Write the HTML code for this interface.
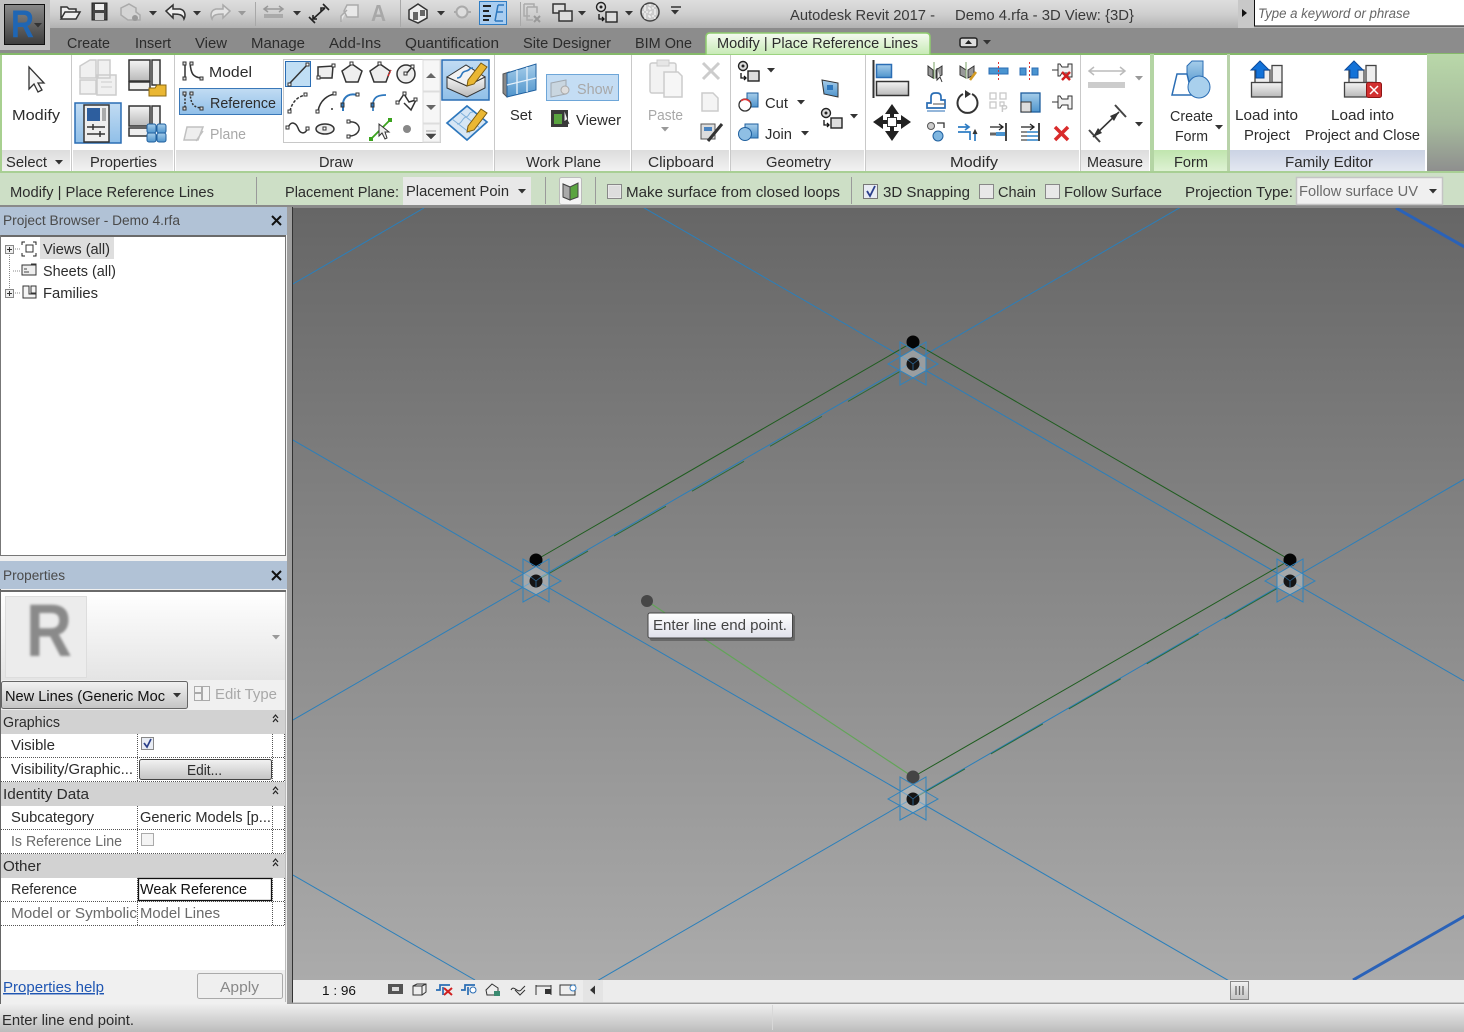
<!DOCTYPE html>
<html><head><meta charset="utf-8"><style>
html,body{margin:0;padding:0;background:#f0f0f0}
body{width:1464px;height:1032px;overflow:hidden}
svg{display:block;position:absolute;left:0;top:0}
text{font-family:"Liberation Sans",sans-serif;font-size:14.5px;fill:#2c2c2c}
.g{fill:#a8a8a8}.m{fill:#6a6a6a}
</style></head><body>
<svg width="1464" height="1032" viewBox="0 0 1464 1032" xmlns="http://www.w3.org/2000/svg">
<defs>
<linearGradient id="tb" x1="0" y1="0" x2="0" y2="1"><stop offset="0" stop-color="#dedede"/><stop offset=".5" stop-color="#cfcfcf"/><stop offset="1" stop-color="#b2b2b2"/></linearGradient>
<linearGradient id="cv" x1="0" y1="0" x2="0" y2="1"><stop offset="0" stop-color="#666"/><stop offset="1" stop-color="#ababab"/></linearGradient>
<linearGradient id="st" x1="0" y1="0" x2="0" y2="1"><stop offset="0" stop-color="#efefef"/><stop offset="1" stop-color="#bcbcbc"/></linearGradient>
<linearGradient id="tab" x1="0" y1="0" x2="0" y2="1"><stop offset="0" stop-color="#f6fbf2"/><stop offset="1" stop-color="#c6eab4"/></linearGradient>
<linearGradient id="rb" x1="0" y1="0" x2="0" y2="1"><stop offset="0" stop-color="#8a8a8a"/><stop offset="1" stop-color="#3c3c3c"/></linearGradient>
<linearGradient id="ft" x1="0" y1="0" x2="0" y2="1"><stop offset="0" stop-color="#dcdcdc"/><stop offset="1" stop-color="#f2f2f2"/></linearGradient>
<linearGradient id="ftg" x1="0" y1="0" x2="0" y2="1"><stop offset="0" stop-color="#c0e5ae"/><stop offset="1" stop-color="#dff2d5"/></linearGradient>
<linearGradient id="ftb" x1="0" y1="0" x2="0" y2="1"><stop offset="0" stop-color="#cbd3e4"/><stop offset="1" stop-color="#e4e8f1"/></linearGradient>
<linearGradient id="rg" x1="0" y1="0" x2="0" y2="1"><stop offset="0" stop-color="#b9d8a9"/><stop offset=".6" stop-color="#a5b99c"/><stop offset="1" stop-color="#8e8e8e"/></linearGradient>
<linearGradient id="gr" x1="0" y1="0" x2="0" y2="1"><stop offset="0" stop-color="#f4f4f4"/><stop offset="1" stop-color="#b9b9b9"/></linearGradient>
<linearGradient id="bl" x1="0" y1="0" x2="0" y2="1"><stop offset="0" stop-color="#a6cdea"/><stop offset="1" stop-color="#4f94cc"/></linearGradient>
<linearGradient id="sel" x1="0" y1="0" x2="0" y2="1"><stop offset="0" stop-color="#c2dcf3"/><stop offset="1" stop-color="#90bfe8"/></linearGradient>
<linearGradient id="btn" x1="0" y1="0" x2="0" y2="1"><stop offset="0" stop-color="#f2f2f2"/><stop offset="1" stop-color="#c4c4c4"/></linearGradient>
<linearGradient id="tip" x1="0" y1="0" x2="0" y2="1"><stop offset="0" stop-color="#fff"/><stop offset="1" stop-color="#dfe0ea"/></linearGradient>
<linearGradient id="pv" x1="0" y1="0" x2="0" y2="1"><stop offset="0" stop-color="#fff"/><stop offset="1" stop-color="#e4e4e4"/></linearGradient>
<filter id="soft" x="-10%" y="-10%" width="120%" height="120%"><feGaussianBlur stdDeviation="1.2"/></filter>
<g id="wp"><path d="M-13-6L0-13.500L13-6V8L0 15.500L-13 8Z" fill="#c8d0d4" fill-opacity=".45"/><path d="M-25 1L13-21V22ZM25 1L-13-21V22Z" fill="none" stroke="#2f83bd" stroke-width="1"/><circle cy="1" r="6.500" fill="#151515"/><path d="M0 1V7M0 1L-5-3M0 1L5-3" stroke="#2f6d9e" stroke-width=".8" fill="none"/></g>
<path id="ar" d="M0 0H8L4 4.500Z" fill="#333"/>
<path id="arg" d="M0 0H8L4 4.500Z" fill="#999"/>
<g id="pin"><path d="M0 8H6" stroke="#333" fill="none"/><path d="M6 2H8L10 5H16V2H20V15H16V11H10L8 14H6Z" fill="#f2f2f2" stroke="#333"/></g>
<g id="sw"><circle cx="5" cy="5" r="4.500" fill="#ddd" stroke="#222" stroke-width="1.400"/><circle cx="5" cy="5" r="1.500" fill="#222"/><rect x="10" y="10" width="11" height="10" fill="#ddd" stroke="#222" stroke-width="1.400"/><path d="M3 12V17H8M6 15L8 17L6 19" fill="none" stroke="#111" stroke-width="1.300"/></g>
</defs>

<!-- title bar -->
<rect width="1464" height="28" fill="url(#tb)"/>
<!-- QAT -->
<path d="M61 18V7H67L69 9H76V12M61 19L65 12H80L76 19Z" fill="#efefef" stroke="#333" stroke-width="1.500"/>
<path d="M92 3H107V20H92Z" fill="#444" stroke="#222"/><rect x="95" y="4" width="9" height="6" fill="#eee"/><rect x="95" y="13" width="9" height="7" fill="#ccc"/>
<path d="M121 8L129 4L136 8V12L140 15V20H128L121 15Z" fill="#d4d4d4" stroke="#aaa" stroke-width="1.500"/><circle cx="135" cy="18" r="3" fill="#999"/>
<use href="#ar" x="149" y="11"/>
<path d="M166 11L173 5V9H180C185 10 186 15 184 19C183 15 180 14 173 14V18Z" fill="#eee" stroke="#333" stroke-width="1.500"/>
<use href="#ar" x="193" y="11"/>
<path d="M230 11L223 5V9H216C211 10 210 15 212 19C213 15 216 14 223 14V18Z" fill="#e4e4e4" stroke="#aaa" stroke-width="1.500"/>
<use href="#arg" x="238" y="11"/>
<path d="M255.500 2V26" stroke="#a8a8a8"/>
<path d="M264 9H283M268 6L264 9L268 12M279 6L283 9L279 12" fill="none" stroke="#999" stroke-width="1.500"/><rect x="264" y="14" width="19" height="4" fill="#aaa"/>
<use href="#ar" x="293" y="11"/>
<path d="M313 19L325 8M309 17L315 23M323 4L329 10M313 15V19H317M321 12V8H325" fill="none" stroke="#222" stroke-width="1.600"/>
<path d="M341 22V16L347 10M347 5H358V17H347L344 11Z" fill="#e8e8e8" stroke="#aaa" stroke-width="1.500"/>
<text x="371" y="21" class="g" style="font-size:23px;font-weight:bold" textLength="15" lengthAdjust="spacingAndGlyphs">A</text>
<path d="M400.500 0V27" stroke="#a8a8a8"/>
<path d="M409 10L418 4L427 10V18L418 23L409 19Z" fill="#eee" stroke="#333" stroke-width="1.500"/><path d="M413 12H418V20H413ZM420 10H425V16H420Z" fill="#666"/>
<use href="#ar" x="437" y="11"/>
<path d="M454 12H457M467 12H471" stroke="#aaa" stroke-width="2"/><circle cx="462" cy="12" r="5.500" fill="#ddd" stroke="#aaa" stroke-width="2"/>
<rect x="479.500" y="1.500" width="27" height="23" fill="#a9cdf0" stroke="#2f7dc4"/>
<path d="M483 6H491M483 11H489M483 16H491M483 20H489" stroke="#222" stroke-width="2"/><path d="M495 21L498 5M498 5H504M497 12H503M495 21H503" stroke="#2d77bd" stroke-width="1.500" fill="none"/>
<path d="M520.500 2V26" stroke="#a8a8a8"/>
<path d="M524 4H534V7M524 4V16H530M527 7H537V13M527 7V20H533" fill="none" stroke="#aaa" stroke-width="1.500"/><path d="M534 16L540 22M540 16L534 22" stroke="#999" stroke-width="2"/>
<rect x="553" y="4" width="12" height="9" fill="#ddd" stroke="#333" stroke-width="1.500"/><rect x="559" y="11" width="13" height="10" fill="#ddd" stroke="#333" stroke-width="1.500"/>
<use href="#ar" x="578" y="11"/>
<use href="#sw" x="596" y="2"/>
<use href="#ar" x="625" y="11"/>
<circle cx="650" cy="12" r="9" fill="#ccc" stroke="#444" stroke-width="1.500"/><path d="M644 8H656M642 12H658M644 16H656M650 4V20M645 5V19M655 5V19" stroke="#fff" stroke-dasharray="2 2" fill="none"/>
<path d="M671 7H681" stroke="#333" stroke-width="1.500"/><use href="#ar" x="671" y="10"/>
<text x="790" y="20" style="fill:#3a3a3a" textLength="145" lengthAdjust="spacingAndGlyphs">Autodesk Revit 2017 -</text>
<text x="955" y="20" style="fill:#3a3a3a" textLength="179" lengthAdjust="spacingAndGlyphs">Demo 4.rfa - 3D View: {3D}</text>
<rect x="1238" y="0" width="16" height="28" fill="#c8c8c8"/>
<path d="M1242 9L1247 13L1242 17Z" fill="#111"/>
<rect x="1254.500" y="-2" width="212" height="28" fill="#fff" stroke="#111"/>
<text x="1258" y="18" style="font-size:13.500px;font-style:italic;fill:#666" textLength="152" lengthAdjust="spacingAndGlyphs">Type a keyword or phrase</text>

<!-- tab bar -->
<rect y="28" width="1464" height="26" fill="#8c8c8c"/>
<rect x="0" y="28" width="50" height="22" fill="#bfbfbf"/>
<rect x="0" y="0" width="50" height="28" fill="#bfbfbf"/>
<rect x="4.500" y="4.500" width="40" height="40" fill="url(#rb)" stroke="#111"/>
<text x="11" y="37" style="font-size:39px;font-weight:bold;fill:#1f66b4" textLength="23" lengthAdjust="spacingAndGlyphs">R</text>
<use href="#ar" x="34" y="23"/>
<g>
<text x="67" y="48" textLength="43" lengthAdjust="spacingAndGlyphs">Create</text>
<text x="135" y="48" textLength="36" lengthAdjust="spacingAndGlyphs">Insert</text>
<text x="195" y="48" textLength="32" lengthAdjust="spacingAndGlyphs">View</text>
<text x="251" y="48" textLength="54" lengthAdjust="spacingAndGlyphs">Manage</text>
<text x="329" y="48" textLength="52" lengthAdjust="spacingAndGlyphs">Add-Ins</text>
<text x="405" y="48" textLength="94" lengthAdjust="spacingAndGlyphs">Quantification</text>
<text x="523" y="48" textLength="88" lengthAdjust="spacingAndGlyphs">Site Designer</text>
<text x="635" y="48" textLength="57" lengthAdjust="spacingAndGlyphs">BIM One</text>
</g>
<rect x="0" y="53" width="1464" height="2" fill="#85b96a"/>
<path d="M706 55V37Q706 33 710 33H926Q930 33 930 37V55Z" fill="url(#tab)" stroke="#8ecb6e" stroke-width="1.500"/>
<text x="717" y="48" textLength="201" lengthAdjust="spacingAndGlyphs">Modify | Place Reference Lines</text>
<rect x="960" y="38" width="17" height="9" rx="2" fill="#ddd" stroke="#222" stroke-width="1.500"/><path d="M965 44L968.500 40L972 44Z" fill="#222"/>
<use href="#ar" x="983" y="40" />

<!-- ribbon -->
<rect y="55" width="1464" height="117" fill="#fff"/>
<rect x="1427" y="54" width="37" height="118" fill="url(#rg)"/>
<rect x="1150" y="54" width="4" height="118" fill="#b4d5a4"/>
<rect x="1227" y="54" width="3" height="118" fill="#b8d2a9"/>
<g fill="url(#ft)">
<rect x="2" y="150" width="68" height="22"/><rect x="73" y="150" width="100" height="22"/><rect x="176" y="150" width="317" height="22"/><rect x="495" y="150" width="135" height="22"/><rect x="632" y="150" width="97" height="22"/><rect x="731" y="150" width="133" height="22"/><rect x="866" y="150" width="213" height="22"/><rect x="1081" y="150" width="68" height="22"/>
</g>
<rect x="1154" y="150" width="73" height="22" fill="url(#ftg)"/><rect x="1230" y="150" width="195" height="22" fill="url(#ftb)"/>
<g stroke="#c9c9c9"><path d="M71.500 55V172M174.500 55V172M494.500 55V172M631.500 55V172M730.500 55V172M865.500 55V172M1080.500 55V172"/></g>
<rect x="0" y="55" width="2" height="117" fill="#a8d090"/>
<rect x="0" y="171" width="1464" height="2" fill="#a8cf94"/>
<g>
<text x="12" y="120" textLength="48" lengthAdjust="spacingAndGlyphs">Modify</text>
<text x="6" y="167" textLength="41" lengthAdjust="spacingAndGlyphs">Select</text>
<text x="90" y="167" textLength="67" lengthAdjust="spacingAndGlyphs">Properties</text>
<text x="319" y="167" textLength="34" lengthAdjust="spacingAndGlyphs">Draw</text>
<text x="526" y="167" textLength="75" lengthAdjust="spacingAndGlyphs">Work Plane</text>
<text x="648" y="167" textLength="66" lengthAdjust="spacingAndGlyphs">Clipboard</text>
<text x="766" y="167" textLength="65" lengthAdjust="spacingAndGlyphs">Geometry</text>
<text x="950" y="167" textLength="48" lengthAdjust="spacingAndGlyphs">Modify</text>
<text x="1087" y="167" textLength="56" lengthAdjust="spacingAndGlyphs">Measure</text>
<text x="1174" y="167" textLength="34" lengthAdjust="spacingAndGlyphs">Form</text>
<text x="1285" y="167" textLength="88" lengthAdjust="spacingAndGlyphs">Family Editor</text>
<text x="209" y="77" textLength="43" lengthAdjust="spacingAndGlyphs">Model</text>
<text x="510" y="120" textLength="22" lengthAdjust="spacingAndGlyphs">Set</text>
<text x="576" y="125" textLength="45" lengthAdjust="spacingAndGlyphs">Viewer</text>
<text x="765" y="108" textLength="23" lengthAdjust="spacingAndGlyphs">Cut</text>
<text x="765" y="139" textLength="27" lengthAdjust="spacingAndGlyphs">Join</text>
<text x="1170" y="121" textLength="43" lengthAdjust="spacingAndGlyphs">Create</text>
<text x="1175" y="141" textLength="33" lengthAdjust="spacingAndGlyphs">Form</text>
<text x="1235" y="120" textLength="63" lengthAdjust="spacingAndGlyphs">Load into</text>
<text x="1244" y="140" textLength="46" lengthAdjust="spacingAndGlyphs">Project</text>
<text x="1331" y="120" textLength="63" lengthAdjust="spacingAndGlyphs">Load into</text>
<text x="1305" y="140" textLength="115" lengthAdjust="spacingAndGlyphs">Project and Close</text>
</g>
<use href="#ar" x="55" y="160"/>
<!-- modify cursor -->
<path d="M29 67V89L34 84L38 92L42 90L38 83H44Z" fill="#f6f6f6" stroke="#333" stroke-width="1.300"/>
<!-- properties icons -->
<path d="M80 66L90 60H96V78H80ZM98 60H110V78H98ZM80 80H96V94H80ZM97 75H116V95H97Z" fill="#f0f0f0" stroke="#ccc" stroke-width="1.500"/>
<path d="M101 82H112M101 87H112" stroke="#ccc"/>
<rect x="129" y="60" width="21" height="21" fill="url(#gr)" stroke="#333" stroke-width="1.500"/><rect x="152" y="60" width="8" height="25" fill="#eee" stroke="#333" stroke-width="1.500"/><rect x="129" y="82" width="21" height="8" fill="#eee" stroke="#333" stroke-width="1.500"/>
<path d="M149 88H155L157 85H166V96H149Z" fill="#eab733" stroke="#8c6a13"/>
<rect x="75" y="103" width="46" height="40" fill="url(#sel)" stroke="#2a6db4" stroke-width="1.500"/>
<rect x="84" y="105" width="25" height="37" fill="#eee" stroke="#333" stroke-width="1.500"/><rect x="87" y="108" width="13" height="13" fill="#2d5e9e"/><rect x="102" y="108" width="4" height="13" fill="#aaa"/>
<path d="M87 127H105M87 134H105M93 124V130M100 131V137" stroke="#333" stroke-width="1.500"/>
<rect x="129" y="106" width="21" height="20" fill="url(#gr)" stroke="#333" stroke-width="1.500"/><rect x="152" y="106" width="8" height="24" fill="#eee" stroke="#333" stroke-width="1.500"/><rect x="129" y="128" width="21" height="8" fill="#eee" stroke="#333" stroke-width="1.500"/>
<g fill="url(#bl)" stroke="#1f5f9e"><rect x="147" y="124" width="9" height="9" rx="2"/><rect x="157" y="124" width="9" height="9" rx="2"/><rect x="147" y="133" width="9" height="9" rx="2"/><rect x="157" y="133" width="9" height="9" rx="2"/></g>
<!-- draw -->
<path d="M185 65V78M190 63C191 74 193 77 201 78" fill="none" stroke="#333" stroke-width="1.500"/><g fill="#ddd" stroke="#333"><rect x="183" y="62" width="3" height="3"/><rect x="190" y="62" width="3" height="3"/><rect x="183" y="77" width="3" height="3"/><rect x="200" y="77" width="3" height="3"/></g>
<rect x="179.500" y="88.500" width="102" height="26" fill="url(#sel)" stroke="#3a78b8"/>
<path d="M185 95V108M190 93C191 104 193 107 201 108" fill="none" stroke="#333" stroke-width="1.500" stroke-dasharray="2 1.500"/><g fill="#ddd" stroke="#333"><rect x="183" y="92" width="3" height="3"/><rect x="190" y="92" width="3" height="3"/><rect x="183" y="107" width="3" height="3"/><rect x="200" y="107" width="3" height="3"/></g>
<text x="210" y="108" textLength="66" lengthAdjust="spacingAndGlyphs">Reference</text>
<path d="M184 140L187 127H203L198 140ZM196 141L203 131" fill="#eee" stroke="#c0c0c0" stroke-width="1.500"/>
<text x="210" y="139" class="g" textLength="36" lengthAdjust="spacingAndGlyphs">Plane</text>
<rect x="283.500" y="59.500" width="157" height="83" fill="#fff" stroke="#c8c8c8"/>
<rect x="423" y="60" width="17" height="31" fill="#f6f6f6" stroke="#ddd"/><rect x="423" y="92" width="17" height="31" fill="#f6f6f6" stroke="#ddd"/><rect x="423" y="124" width="17" height="18" fill="#f4f4f4" stroke="#ddd"/>
<path d="M426 78L431 73L436 78Z" fill="#666"/><path d="M426 105H436L431 110Z" fill="#666"/><path d="M426 131H436M426 134H436L431 139Z" fill="#444" stroke="#444" stroke-width=".5"/>
<rect x="285.500" y="61.500" width="25" height="25" fill="#c0def4" stroke="#2a6db4"/>
<g fill="none" stroke="#333" stroke-width="1.500">
<path d="M290 83L307 65"/>
<path d="M318 67L333 66L332 78L318 78Z" fill="#eee"/><path d="M352 64L362 71L358 82H346L342 71Z" fill="#eee"/><path d="M380 64L390 71L386 82H374L370 71Z" fill="#eee"/><circle cx="406" cy="74" r="9" fill="#eee"/><path d="M406 74L412 67"/>
<path d="M290 111C292 102 298 96 306 95" stroke-dasharray="3 1.500"/><path d="M318 111C320 100 328 95 335 94"/><path d="M343 111V103C344 96 350 93 357 95" stroke="#2d77bd" stroke-width="2"/><path d="M373 111V103C374 97 378 95 386 95" stroke="#2d77bd" stroke-width="1.700"/><path d="M398 103L404 94L409 102L416 100L411 110L404 103" />
<path d="M288 128C291 120 296 123 298 128C300 134 305 135 308 128"/><ellipse cx="325" cy="129" rx="9" ry="5" fill="#eee"/><path d="M349 122C358 121 361 128 358 132C356 135 353 136 349 136"/>
</g>
<g fill="#fff" stroke="#333"><rect x="288" y="83" width="3" height="3"/><rect x="306" y="63" width="3" height="3"/><rect x="317" y="76" width="3" height="3"/><rect x="332" y="64" width="3" height="3"/><rect x="350" y="62" width="3" height="3"/><rect x="378" y="62" width="3" height="3"/><rect x="404" y="72" width="3" height="3"/><rect x="411" y="65" width="3" height="3"/><rect x="288" y="110" width="3" height="3"/><rect x="304" y="93" width="3" height="3"/><rect x="316" y="110" width="3" height="3"/><rect x="333" y="92" width="3" height="3"/><rect x="341" y="103" width="3" height="4" fill="#2d77bd"/><rect x="356" y="93" width="3" height="3"/><rect x="371" y="103" width="3" height="4" fill="#2d77bd"/><rect x="396" y="101" width="3" height="3"/><rect x="403" y="92" width="3" height="3"/><rect x="414" y="98" width="3" height="3"/><rect x="286" y="126" width="3" height="3"/><rect x="306" y="127" width="3" height="3"/><rect x="323" y="127" width="3" height="3"/><rect x="347" y="120" width="3" height="3"/><rect x="347" y="135" width="3" height="3"/></g>
<path d="M388 76L391 70" stroke="#d22" stroke-width="1.500" stroke-dasharray="2 1"/>
<circle cx="332" cy="109" r="1" fill="#333"/>
<path d="M371 139L390 120" stroke="#3ba31e" stroke-width="1.800"/><rect x="369" y="137" width="4" height="4" fill="#3ba31e"/><rect x="388" y="118" width="4" height="4" fill="#3ba31e"/>
<path d="M379 124V136L382 133L385 139L387 138L385 132H389Z" fill="#eee" stroke="#333"/>
<circle cx="407" cy="129" r="4" fill="#888"/>
<rect x="442" y="60" width="47" height="40" fill="url(#sel)" stroke="#2a6db4" stroke-width="1.500"/>
<path d="M447 77V88L467 97L485 88V77L467 86Z" fill="url(#gr)" stroke="#333"/><path d="M447 77L466 65L485 77L467 86Z" fill="#f2f2f2" stroke="#333"/><path d="M457 78C463 78 460 72 466 71C471 70 468 68 473 68" fill="none" stroke="#2d77bd" stroke-width="1.600"/>
<path d="M468 80L481 63L487 67L474 84L467 86Z" fill="#eab733" stroke="#7a5b10"/>
<path d="M447 123L467 106L487 122L467 140Z" fill="#d6e6f5" stroke="#2d77bd" stroke-width="1.700"/><path d="M457 124C462 124 462 118 466 117C470 116 468 112 473 112M452 119L470 133M461 113L480 128" fill="none" stroke="#7fb0da"/>
<path d="M468 126L481 109L487 113L474 130L467 132Z" fill="#eab733" stroke="#7a5b10"/>
<!-- work plane -->
<path d="M503 74L509 72V92L507 97L503 93Z" fill="#888" stroke="#555"/>
<path d="M507 73L536 64V90L507 97Z" fill="url(#bl)" stroke="#1f5f9e"/><path d="M517 70V94M527 67V92M507 85L536 78" stroke="#e8f2fb" stroke-width="1.300"/>
<rect x="546.500" y="74.500" width="72" height="26" fill="#c4ddf4" stroke="#6ea6d8"/>
<path d="M551 83L566 80V94L551 97Z" fill="#c9d6e0" stroke="#a0a8b0"/><circle cx="565" cy="90" r="4" fill="#ddd" stroke="#a8a8a8"/>
<text x="577" y="94" class="g" textLength="36" lengthAdjust="spacingAndGlyphs">Show</text>
<rect x="551" y="110" width="17" height="17" fill="#3a3a3a"/><rect x="554" y="114" width="8" height="10" fill="#5aa440"/><path d="M564 110V122L567 120L569 124" fill="#eee" stroke="#333"/>
<!-- clipboard -->
<rect x="650" y="63" width="26" height="30" rx="2" fill="#f2f2f2" stroke="#ccc" stroke-width="1.500"/><rect x="657" y="60" width="12" height="6" fill="#e6e6e6" stroke="#ccc"/><path d="M664 72H678L682 76V97H664Z" fill="#f6f6f6" stroke="#ccc" stroke-width="1.500"/>
<text x="648" y="120" class="g" textLength="35" lengthAdjust="spacingAndGlyphs">Paste</text>
<use href="#arg" x="661" y="127"/>
<path d="M703 63L719 79M719 63L703 79" stroke="#ccc" stroke-width="3"/>
<path d="M702 93H713L718 98V111H702Z" fill="#f4f4f4" stroke="#ccc" stroke-width="1.500"/>
<rect x="701" y="124" width="14" height="15" fill="#ddd" stroke="#555"/><rect x="704" y="127" width="8" height="4" fill="#4a84c0"/><path d="M708 141L722 124" stroke="#333" stroke-width="3"/>
<!-- geometry -->
<use href="#sw" x="738" y="61"/><use href="#ar" x="767" y="68"/>
<rect x="747" y="93" width="11" height="14" fill="url(#bl)" stroke="#1f5f9e"/><circle cx="745" cy="105" r="6" fill="#fff" stroke="#333" stroke-width="1.300"/><path d="M741 101A6 6 0 0 1 750 102" stroke="#d33" fill="none" stroke-width="1.500"/>
<use href="#ar" x="797" y="100"/>
<rect x="745" y="124" width="13" height="14" fill="url(#bl)" stroke="#1f5f9e"/><circle cx="745" cy="134" r="6.500" fill="#8fbfe4" stroke="#1f5f9e"/>
<use href="#ar" x="801" y="131"/>
<path d="M822 80L838 83V97L824 94Z" fill="url(#bl)" stroke="#333"/><rect x="827" y="85" width="6" height="5" fill="#2d77bd"/>
<use href="#sw" x="821" y="108"/><use href="#ar" x="850" y="114"/>
<!-- modify -->
<path d="M873.500 60V98" stroke="#333" stroke-width="2"/>
<rect x="876.500" y="64.500" width="15" height="13" fill="url(#bl)" stroke="#2a6db4" stroke-width="1.500"/><rect x="876.500" y="81.500" width="32" height="14" fill="url(#gr)" stroke="#333" stroke-width="1.500"/>
<path d="M892 104L899 114H885ZM892 141L885 131H899ZM873 122L883 115V129ZM911 122L901 115V129Z" fill="#222"/>
<path d="M892 112V132M881 122H903" stroke="#222" stroke-width="4"/>
<rect x="887.500" y="117.500" width="9" height="9" fill="#fff" stroke="#333"/>
<path d="M934 62V79" stroke="#7aa266"/><path d="M928 66L933 70V78L928 75ZM936 70L942 66V75L936 78Z" fill="#999" stroke="#333"/>
<path d="M937 68V80L940 77L942 82" fill="#eee" stroke="#333"/>
<path d="M960 66L966 70V78L960 75ZM968 70L974 66V75L968 78Z" fill="#999" stroke="#333"/><path d="M966 62V79" stroke="#7aa266"/><path d="M970 80L976 72" stroke="#d39a22" stroke-width="2.500"/>
<rect x="989" y="68" width="19" height="6" fill="#4a94d0" stroke="#2a6db4"/><path d="M998.500 62V80" stroke="#d33" stroke-dasharray="2 2"/>
<rect x="1020" y="68" width="6" height="7" fill="#4a94d0" stroke="#2a6db4"/><rect x="1032" y="68" width="6" height="7" fill="#4a94d0" stroke="#2a6db4"/><path d="M1029.500 62V80" stroke="#d33" stroke-dasharray="2 2"/>
<use href="#pin" x="1052" y="62"/><path d="M1062 72L1070 80M1070 72L1062 80" stroke="#d02020" stroke-width="2.500"/>
<path d="M927 108V103H931V97Q931 93 935 93H937Q941 93 941 97V100H945V108Z" fill="#fff" stroke="#2a6db4" stroke-width="1.700"/><path d="M933 104H945" stroke="#777" stroke-width="1.300"/><path d="M927 111H945" stroke="#2a6db4"/>
<path d="M963 94A10 10 0 1 0 972 94" fill="none" stroke="#333" stroke-width="2"/><path d="M965 90L971 94L965 98Z" fill="#333"/>
<g fill="none" stroke="#c8c8c8" stroke-width="1.300"><rect x="990" y="93" width="6" height="6"/><rect x="1000" y="93" width="6" height="6"/><rect x="990" y="102" width="6" height="6"/><rect x="1000" y="102" width="4" height="4"/></g><text x="1001" y="112" style="font-size:10px;font-weight:bold;fill:#c8c8c8">P</text>
<rect x="1021" y="93" width="19" height="19" fill="url(#bl)" stroke="#1f5f9e" stroke-width="1.300"/><rect x="1021" y="102" width="10" height="10" fill="#ddd" stroke="#333"/>
<use href="#pin" x="1052" y="94"/>
<circle cx="931" cy="126" r="3.500" fill="#ccc" stroke="#555"/><circle cx="938" cy="136" r="5" fill="#7fb6e0" stroke="#1f5f9e"/><path d="M937 123H944V128" stroke="#333" fill="none" stroke-width="1.300"/>
<path d="M958 127H969M965 124L969 127L965 130M958 132H970V140M975 141V131" stroke="#2f7dc4" stroke-width="1.700" fill="none"/><path d="M973 134L975 130L977 134" fill="#333" stroke="#333"/>
<path d="M990 127H1002M999 124L1003 127L999 130" stroke="#222" fill="none" stroke-width="1.300"/><path d="M1006 123V141" stroke="#333" stroke-width="1.800"/><path d="M990 134H996" stroke="#666" stroke-width="3"/><rect x="996" y="132" width="9" height="4" fill="#4a94d0"/>
<path d="M1021 127H1033M1030 124L1034 127L1030 130" stroke="#222" fill="none" stroke-width="1.300"/><path d="M1039 123V141" stroke="#333" stroke-width="1.800"/><path d="M1021 132H1027M1021 136H1027M1021 140H1027" stroke="#666" stroke-width="1.500"/><path d="M1027 132H1038M1027 136H1038M1027 140H1038" stroke="#4a94d0" stroke-width="1.800"/>
<path d="M1055 127L1068 140M1068 127L1055 140" stroke="#d92b2b" stroke-width="3.500"/>
<!-- measure -->
<path d="M1089 71H1125M1094 67L1089 71L1094 75M1120 67L1125 71L1120 75" fill="none" stroke="#bbb" stroke-width="1.500"/><rect x="1088" y="82" width="37" height="6" fill="#ccc"/>
<use href="#arg" x="1135" y="76"/>
<path d="M1093 137L1119 112" stroke="#333" stroke-width="1.600"/><path d="M1089 130L1100 142M1115 105L1126 117" stroke="#444" stroke-width="2"/><path d="M1093 137L1098 128L1102 133ZM1119 112L1114 121L1110 116Z" fill="#333"/>
<use href="#ar" x="1135" y="122"/>
<!-- form -->
<path d="M1187 66L1192 61H1203V88H1187Z" fill="url(#bl)" stroke="#2a6db4"/>
<path d="M1177 74H1187L1192 95H1172Z" fill="#fff" stroke="#2a6db4" stroke-width="1.500"/>
<circle cx="1199" cy="87" r="11" fill="#a9d0ed" stroke="#2a6db4"/>
<use href="#ar" x="1215" y="125"/>
<!-- load -->
<rect x="1272" y="65.500" width="10" height="17" fill="#eee" stroke="#444" stroke-width="1.300"/><rect x="1255" y="70" width="15" height="13" fill="#eee" stroke="#444" stroke-width="1.300"/>
<rect x="1251.500" y="82.500" width="30.500" height="14.500" fill="url(#gr)" stroke="#444" stroke-width="1.300"/>
<path d="M1260 61L1269 70H1264V78H1256V70H1251Z" fill="#1372d8" stroke="#0a4a9e"/>
<rect x="1366" y="65.500" width="10" height="17" fill="#eee" stroke="#444" stroke-width="1.300"/><rect x="1349" y="70" width="15" height="13" fill="#eee" stroke="#444" stroke-width="1.300"/>
<rect x="1344.500" y="82.500" width="28" height="14.500" fill="url(#gr)" stroke="#444" stroke-width="1.300"/>
<path d="M1354 61L1363 70H1358V78H1350V70H1345Z" fill="#1372d8" stroke="#0a4a9e"/>
<rect x="1366.500" y="82.500" width="15" height="15" rx="2" fill="#d23030" stroke="#8e1515"/><path d="M1370 86L1378 94M1378 86L1370 94" stroke="#fff" stroke-width="1.500"/>

<!-- options bar -->
<rect y="173" width="1464" height="33" fill="#cddfc6"/>
<rect y="205" width="1464" height="3" fill="#8a8a8a"/>
<g stroke="#9a9a9a"><path d="M256.500 177V204M545.500 177V204M595.500 177V204M851.500 177V204"/></g>
<text x="10" y="197" textLength="204" lengthAdjust="spacingAndGlyphs">Modify | Place Reference Lines</text>
<text x="285" y="197" textLength="114" lengthAdjust="spacingAndGlyphs">Placement Plane:</text>
<rect x="403" y="177" width="128" height="28" fill="#e8e8e8"/>
<text x="406" y="196" textLength="103" lengthAdjust="spacingAndGlyphs">Placement Poin</text>
<use href="#ar" x="518" y="189"/>
<rect x="559.500" y="177.500" width="22" height="27" rx="2" fill="#f4f4f4" stroke="#bbb"/>
<path d="M563 184L570 187L578 183V197L570 200L563 197Z" fill="#5aa440" stroke="#444"/><path d="M563 184L570 187V200L563 197Z" fill="#aaa" stroke="#444"/>
<rect x="607.500" y="184.500" width="14" height="14" fill="#e8e8e8" stroke="#888"/><rect x="609" y="186" width="11" height="11" fill="#ddd"/>
<text x="626" y="197" textLength="214" lengthAdjust="spacingAndGlyphs">Make surface from closed loops</text>
<rect x="863.500" y="184.500" width="14" height="14" fill="#e8ecf4" stroke="#777"/>
<path d="M867 191L870 196L875 186" fill="none" stroke="#2a3f8a" stroke-width="1.800"/>
<text x="883" y="197" textLength="87" lengthAdjust="spacingAndGlyphs">3D Snapping</text>
<rect x="979.500" y="184.500" width="14" height="14" fill="#e8e8e8" stroke="#888"/>
<text x="998" y="197" textLength="38" lengthAdjust="spacingAndGlyphs">Chain</text>
<rect x="1045.500" y="184.500" width="14" height="14" fill="#e8e8e8" stroke="#888"/>
<text x="1064" y="197" textLength="98" lengthAdjust="spacingAndGlyphs">Follow Surface</text>
<text x="1185" y="197" textLength="108" lengthAdjust="spacingAndGlyphs">Projection Type:</text>
<rect x="1296.500" y="177.500" width="146" height="27" fill="#f0f0f0" stroke="#c4c4c4" stroke-width="1.500"/>
<text x="1299" y="196" class="m" textLength="119" lengthAdjust="spacingAndGlyphs">Follow surface UV</text>
<use href="#ar" x="1429" y="189"/>

<!-- canvas -->
<rect x="287" y="207" width="6" height="797" fill="#9e9e9e"/>
<rect x="292" y="207" width="1" height="797" fill="#333"/>
<rect x="293" y="208" width="1171" height="772" fill="url(#cv)"/>
<clipPath id="cvc"><rect x="293" y="208" width="1171" height="772"/></clipPath>
<g clip-path="url(#cvc)" fill="none">
<g stroke="#2a7fbb" stroke-width="1">
<path d="M1200 196L293 720"/>
<path d="M620 194L1464 681"/>
<path d="M293 440L1257 997"/>
<path d="M1480 470L590 985"/>
<path d="M293 284L424 208"/>
<path d="M293 875L475 980"/>
</g>
<g stroke="#2a62b8" stroke-width="3"><path d="M1396 208L1470 250"/><path d="M1353 980L1470 913"/></g>
<g stroke="#1f5d1f" stroke-width="1"><path d="M536 560L913 342L1290 560L913 777"/></g>
<path d="M536 581L913 364M913 799L1290 581" stroke="#2b6a3a" stroke-dasharray="60 30"/>
<path d="M647 601L913 777" stroke="#62a458" stroke-width="1.200"/>
</g>
<circle cx="913" cy="342" r="6.500" fill="#050505"/><circle cx="536" cy="560" r="6.500" fill="#050505"/><circle cx="1290" cy="560" r="6.500" fill="#050505"/><circle cx="913" cy="777" r="6.500" fill="#444"/>
<use href="#wp" x="913" y="363"/><use href="#wp" x="536" y="580"/><use href="#wp" x="1290" y="580"/><use href="#wp" x="913" y="798"/>
<circle cx="647" cy="601" r="6" fill="#474747"/>
<rect x="650" y="615" width="145" height="26" rx="2" fill="#333" opacity=".4"/>
<rect x="648" y="613" width="144.500" height="25" rx="2" fill="url(#tip)" stroke="#444"/>
<text x="653" y="630" style="fill:#444" textLength="134" lengthAdjust="spacingAndGlyphs">Enter line end point.</text>

<!-- view bar -->
<rect x="293" y="980" width="1171" height="22" fill="#ececec"/>
<rect x="293" y="1002" width="1171" height="2" fill="#f6f6f6"/>
<rect y="1002.500" x="0" width="1464" height="1.500" fill="#9a9a9a"/>
<text x="322" y="995" style="font-size:13px;fill:#111" textLength="34" lengthAdjust="spacingAndGlyphs">1 : 96</text>
<rect x="388" y="984" width="15" height="10" fill="#555"/><rect x="392" y="987" width="7" height="4" fill="#ddd"/>
<path d="M413 986L417 984H426V992L422 995H413Z" fill="#eee" stroke="#333"/><path d="M413 986H422V995M422 986L426 984" stroke="#333" fill="none"/>
<path d="M436 990H440V985H450M443 987V995" stroke="#2a6db4" stroke-width="1.700" fill="none"/><path d="M444 988L452 995M452 988L444 995" stroke="#d02020" stroke-width="2"/>
<path d="M461 990H465V985H475M468 987V995" stroke="#2a6db4" stroke-width="1.700" fill="none"/><circle cx="473" cy="990" r="3" fill="#fff" stroke="#2a6db4"/>
<path d="M486 990L492 984L498 988V995H487Z" fill="#eee" stroke="#333"/><rect x="494" y="991" width="6" height="5" fill="#3a8a70"/>
<path d="M511 990C514 984 518 995 522 989L525 986M515 990L520 995L525 990" fill="none" stroke="#333"/>
<path d="M536 985V995M551 985V995M536 986H551" fill="none" stroke="#333"/><rect x="545" y="989" width="6" height="5" fill="#333"/>
<rect x="560" y="985" width="15" height="10" fill="#eee" stroke="#333"/><circle cx="573" cy="988" r="3" fill="#fff" stroke="#3b7fc0"/>
<rect x="583" y="980" width="20" height="22" fill="#e4e4e4"/>
<path d="M595 985.500V994.500L590 990Z" fill="#333"/>
<rect x="1230.500" y="981.500" width="18" height="18" fill="url(#btn)" stroke="#888"/>
<path d="M1236 986V995M1239.500 986V995M1243 986V995" stroke="#666" stroke-width="1.300"/>

<!-- status bar -->
<rect y="1004" width="1464" height="28" fill="url(#st)"/>
<text x="2" y="1025" textLength="132" lengthAdjust="spacingAndGlyphs">Enter line end point.</text>
<path d="M772.500 1005V1030" stroke="#d8d8d8"/>

<!-- left panels -->
<rect x="0" y="207" width="287" height="797" fill="#f0f0f0"/>
<rect y="207" width="287" height="28" fill="#b1c2d6"/>
<text x="3" y="225" style="font-size:13.500px;fill:#4a4a4a" textLength="177" lengthAdjust="spacingAndGlyphs">Project Browser - Demo 4.rfa</text>
<path d="M272 216L281 225M281 216L272 225" stroke="#111" stroke-width="2"/>
<rect x="0.500" y="235.500" width="285" height="320" fill="#fff" stroke="#777"/>
<rect x="1" y="235" width="285" height="2" fill="#6a6a6a"/>
<rect x="40" y="237" width="74" height="22" fill="#dedede"/>
<text x="43" y="254" textLength="67" lengthAdjust="spacingAndGlyphs">Views (all)</text>
<text x="43" y="276" textLength="73" lengthAdjust="spacingAndGlyphs">Sheets (all)</text>
<text x="43" y="298" textLength="55" lengthAdjust="spacingAndGlyphs">Families</text>
<path d="M9.500 253V293M13 249H20M13 271H20M13 293H20" stroke="#888" stroke-dasharray="1 1"/>
<g fill="#eee" stroke="#888"><rect x="5.500" y="245.500" width="8" height="8"/><rect x="5.500" y="289.500" width="8" height="8"/></g>
<path d="M7 249.500H12M9.500 247V252M7 293.500H12M9.500 291V296" stroke="#333"/>
<path d="M22 245V242H25M33 242H36V245M36 253V256H33M25 256H22V253" stroke="#222" fill="none"/><rect x="26" y="245" width="7" height="7" fill="#fff" stroke="#333"/>
<rect x="22" y="265" width="14" height="10" fill="#eee" stroke="#333"/><path d="M31 264H36V268" stroke="#333" fill="none"/><path d="M24 272H29M24 269H27" stroke="#444"/>
<path d="M23 286H29V294H36V298H23ZM31 286H36V293H31Z" fill="#f4f4f4" stroke="#333"/>

<rect y="556" width="287" height="5" fill="#f0f0f0"/>
<rect y="561" width="287" height="28" fill="#b1c2d6"/>
<text x="3" y="580" style="font-size:13.500px;fill:#4a4a4a" textLength="62" lengthAdjust="spacingAndGlyphs">Properties</text>
<path d="M272 571L281 580M281 571L272 580" stroke="#111" stroke-width="2"/>
<rect x="1" y="590" width="285" height="2" fill="#6a6a6a"/>
<rect x="1" y="592" width="284" height="88" fill="url(#pv)"/>
<rect x="5.500" y="596.500" width="81" height="81" fill="#ececec" stroke="#ddd"/>
<text x="26" y="656" filter="url(#soft)" style="font-size:74px;font-weight:bold;fill:#8a8a8a" textLength="46" lengthAdjust="spacingAndGlyphs">R</text>
<use href="#arg" x="272" y="635"/>
<rect x="1.500" y="681.500" width="186" height="27" rx="2" fill="url(#btn)" stroke="#666"/>
<text x="5" y="701" style="fill:#111" textLength="160" lengthAdjust="spacingAndGlyphs">New Lines (Generic Moc</text>
<use href="#ar" x="173" y="693"/>
<g fill="#f2f2f2" stroke="#aaa"><rect x="194.500" y="686.500" width="7" height="6"/><rect x="194.500" y="693.500" width="7" height="7"/><rect x="202.500" y="686.500" width="7" height="14"/></g>
<text x="215" y="699" class="g" textLength="62" lengthAdjust="spacingAndGlyphs">Edit Type</text>
<rect x="1" y="710" width="284" height="260" fill="#fff"/>
<g fill="#d2d2d2"><rect x="1" y="710" width="284" height="24"/><rect x="1" y="782" width="284" height="24"/><rect x="1" y="854" width="284" height="24"/></g>
<g stroke="#555" stroke-dasharray="1 1"><path d="M1 757.500H285M1 781.500H285M1 829.500H285M1 853.500H285M1 901.500H285M1 925.500H285"/>
<path d="M137.500 734V782M137.500 806V854M137.500 878V926M272.500 734V782M272.500 806V854M272.500 878V926M284.500 734V782M284.500 806V854M284.500 878V926"/></g>
<text x="3" y="727" textLength="57" lengthAdjust="spacingAndGlyphs">Graphics</text>
<text x="3" y="799" textLength="86" lengthAdjust="spacingAndGlyphs">Identity Data</text>
<text x="3" y="871" textLength="38" lengthAdjust="spacingAndGlyphs">Other</text>
<g fill="none" stroke="#222" stroke-width="1.200"><path d="M273 718L275.500 715L278 718M273 722L275.500 719L278 722"/><path d="M273 790L275.500 787L278 790M273 794L275.500 791L278 794"/><path d="M273 862L275.500 859L278 862M273 866L275.500 863L278 866"/></g>
<text x="11" y="750" textLength="44" lengthAdjust="spacingAndGlyphs">Visible</text>
<text x="11" y="774" textLength="122" lengthAdjust="spacingAndGlyphs">Visibility/Graphic...</text>
<text x="11" y="822" textLength="83" lengthAdjust="spacingAndGlyphs">Subcategory</text>
<text x="11" y="846" class="m" textLength="111" lengthAdjust="spacingAndGlyphs">Is Reference Line</text>
<text x="11" y="894" textLength="66" lengthAdjust="spacingAndGlyphs">Reference</text>
<text x="11" y="918" class="m" textLength="126" lengthAdjust="spacingAndGlyphs">Model or Symbolic</text>
<rect x="141.500" y="737.500" width="12" height="12" fill="#e8ecf4" stroke="#888"/>
<path d="M144 743L147 747L151 739" fill="none" stroke="#2a3f8a" stroke-width="1.700"/>
<rect x="139.500" y="759.500" width="132" height="20" rx="2" fill="url(#btn)" stroke="#444"/>
<text x="187" y="775" textLength="35" lengthAdjust="spacingAndGlyphs">Edit...</text>
<text x="140" y="822" textLength="131" lengthAdjust="spacingAndGlyphs">Generic Models [p...</text>
<rect x="141.500" y="833.500" width="12" height="12" fill="#f4f4f4" stroke="#aaa"/>
<rect x="138.500" y="878.500" width="133" height="22" fill="#fff" stroke="#111" stroke-width="1.300"/>
<text x="140" y="894" style="fill:#111" textLength="107" lengthAdjust="spacingAndGlyphs">Weak Reference</text>
<text x="140" y="918" class="m" textLength="80" lengthAdjust="spacingAndGlyphs">Model Lines</text>
<rect x="1" y="970" width="285" height="32" fill="#f0f0f0"/>
<text x="3" y="992" style="fill:#1f56b3;text-decoration:underline" textLength="101" lengthAdjust="spacingAndGlyphs">Properties help</text>
<rect x="197.500" y="973.500" width="85" height="25" rx="2" fill="#efefef" stroke="#aaa"/>
<text x="220" y="992" class="g" style="fill:#888" textLength="39" lengthAdjust="spacingAndGlyphs">Apply</text>
<rect x="0" y="589" width="1" height="415" fill="#666"/>
<rect x="285" y="592" width="1" height="410" fill="#bbb"/>
</svg>
</body></html>
